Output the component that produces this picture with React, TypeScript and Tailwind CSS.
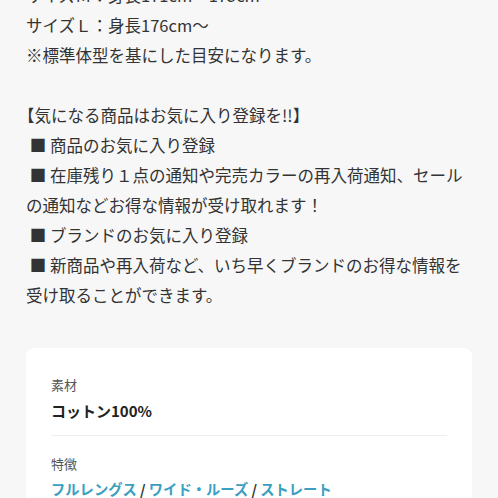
import React from "react";

const font = { fontFamily: '"Noto Sans CJK JP", "Noto Sans", sans-serif' };

export default function App() {
  const lines: React.ReactNode[] = [
    "サイズＭ：身長171cm～175cm",
    "サイズＬ：身長176cm～",
    "※標準体型を基にした目安になります。",
    "\u00a0",
    <>
      <span className="inline-block ml-[-8px]">【</span>気になる商品はお気に入り登録を!!<span className="inline-block mr-[-8px]">】</span>
    </>,
    "\u00a0■ 商品のお気に入り登録",
    "\u00a0■ 在庫残り１点の通知や完売カラーの再入荷通知、セールの通知などお得な情報が受け取れます！",
    "\u00a0■ ブランドのお気に入り登録",
    "\u00a0■ 新商品や再入荷など、いち早くブランドのお得な情報を受け取ることができます。",
  ];
  return (
    <div className="w-[498px] h-[498px] overflow-hidden bg-[#f7f7f7]" style={font}>
      <div className="px-[26px] mt-[-20px]">
        <div className="text-[16.5px] leading-[30px] text-[#333333]">
          {lines.map((l, i) => (
            <p key={i}>{l}</p>
          ))}
        </div>
        <div className="mt-[38px] bg-white rounded-[8px] px-[25px] pt-[27px] pb-[20px]">
          <div className="text-[13px] leading-[20px] text-[#555555]">素材</div>
          <div className="mt-[6px] text-[15px] leading-[20px] font-bold text-[#222222]">コットン100%</div>
          <div className="mt-[14px] h-px bg-[#eeeeee]" />
          <div className="mt-[18px] text-[13px] leading-[20px] text-[#555555]">特徴</div>
          <div className="mt-[5px] text-[14.3px] leading-[20px] font-bold text-[#3a9fc0]">
            <span>フルレングス</span>
            <span className="text-[#333333]"> / </span>
            <span>ワイド・ルーズ</span>
            <span className="text-[#333333]"> / </span>
            <span>ストレート</span>
          </div>
        </div>
      </div>
    </div>
  );
}
